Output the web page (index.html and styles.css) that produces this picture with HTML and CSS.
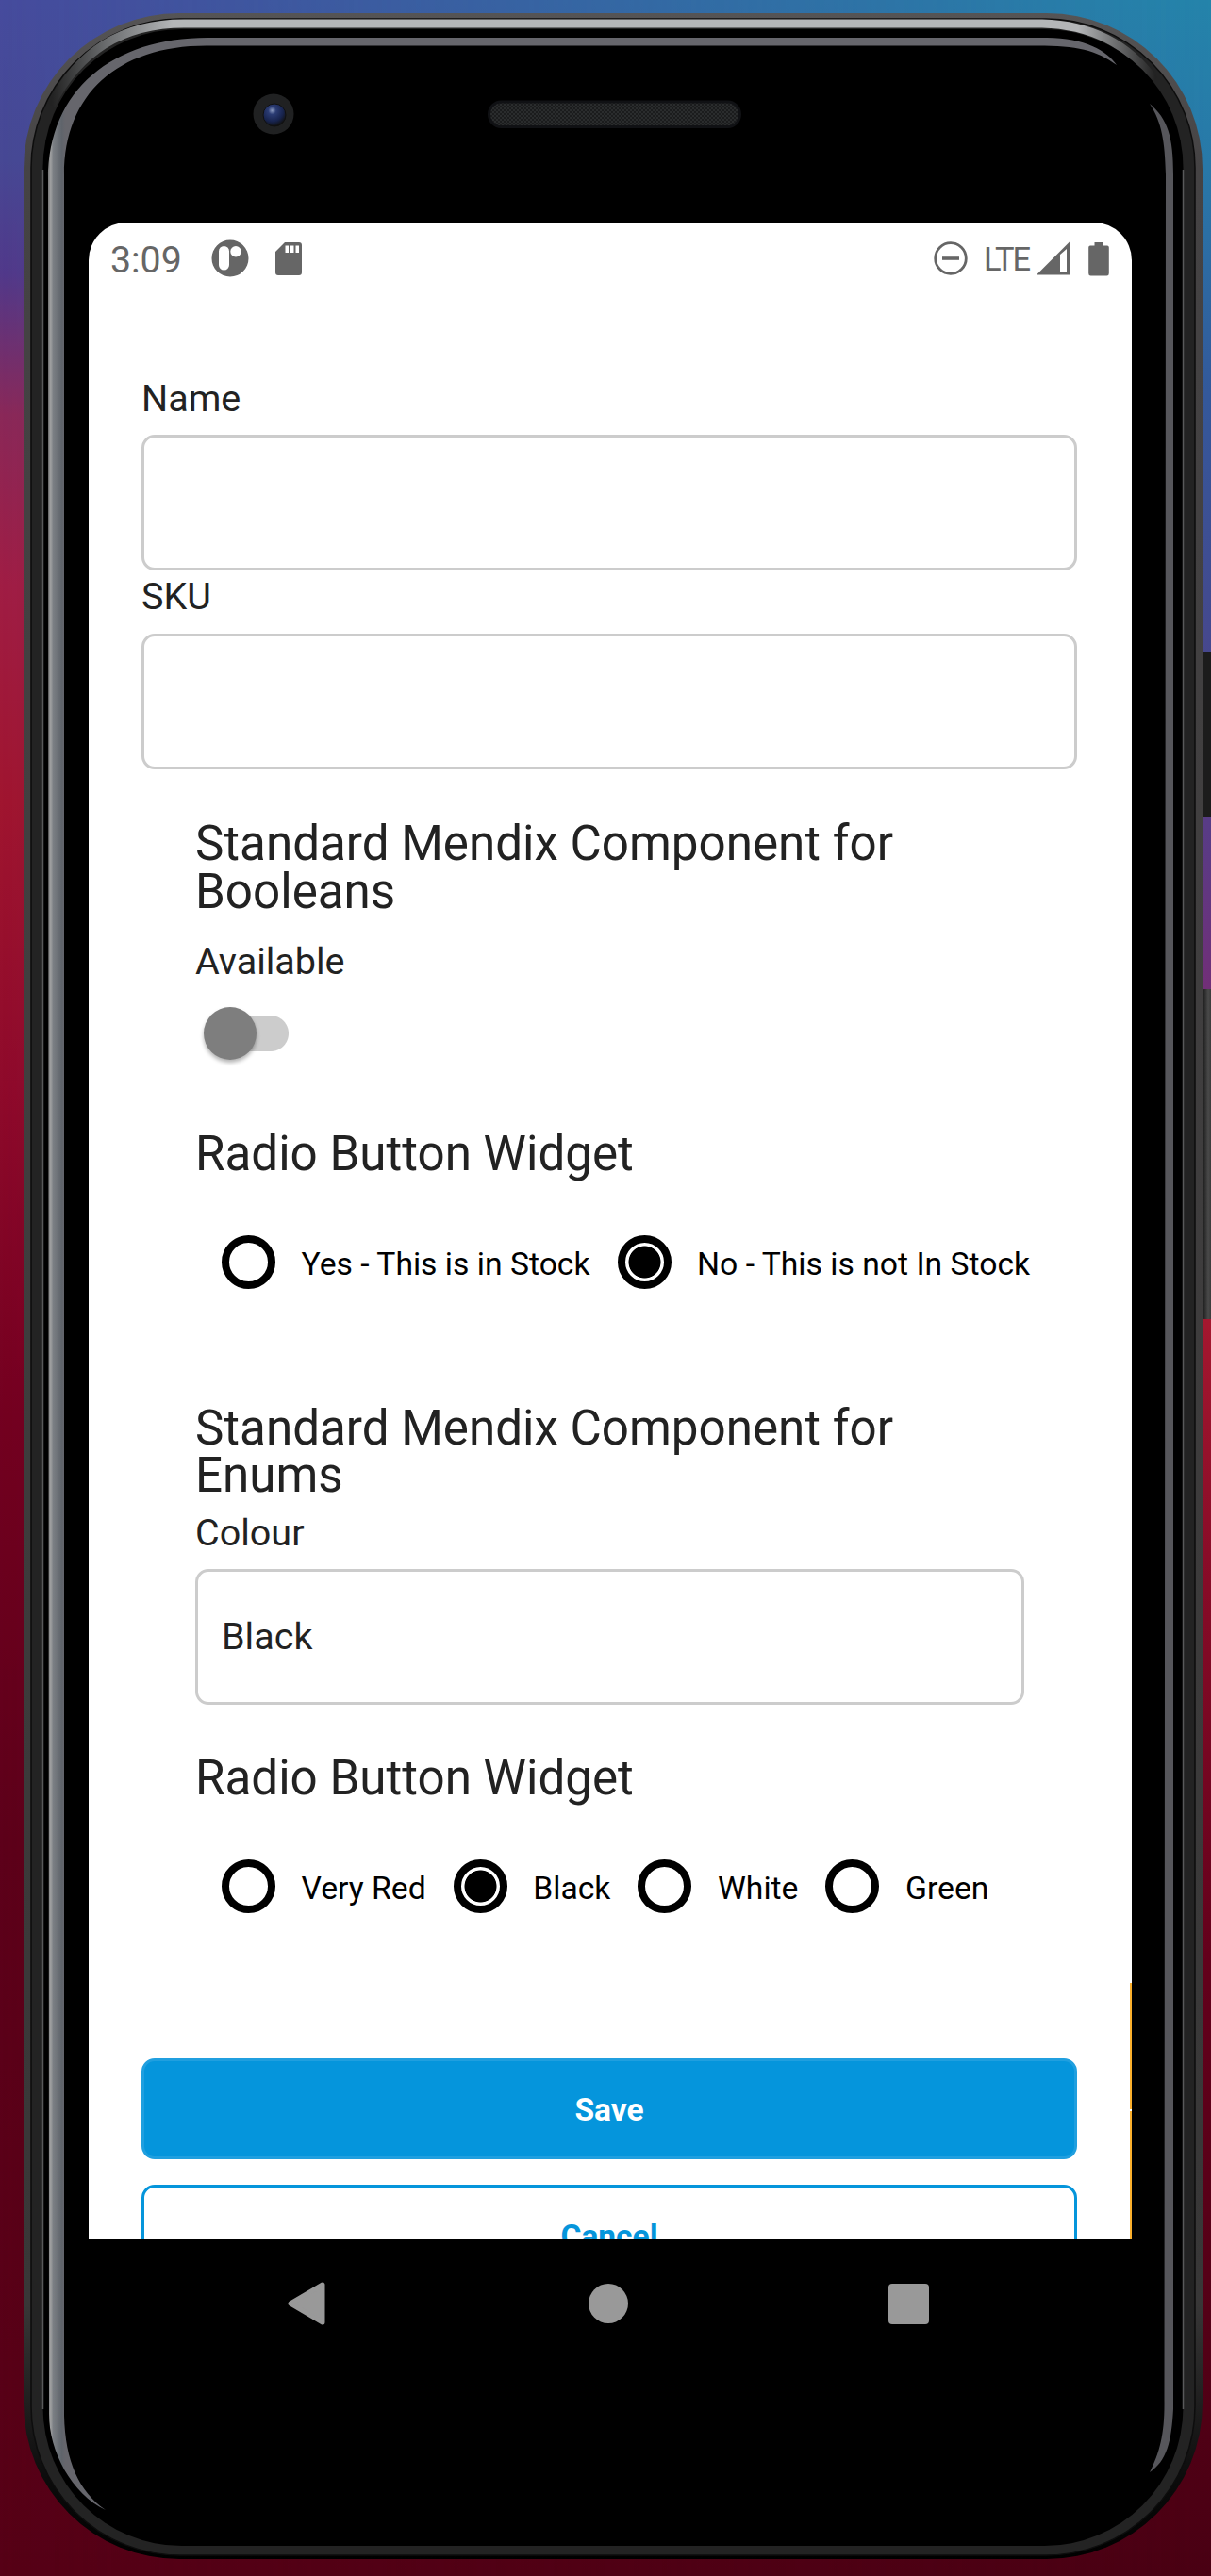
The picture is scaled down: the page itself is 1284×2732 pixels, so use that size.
FILE: index.html
```html
<!DOCTYPE html>
<html lang="en">
<head>
<meta charset="utf-8">
<title>Product form</title>
<link rel="stylesheet" href="styles.css">
</head>
<body>
<div class="stage">
  <div class="wallpaper"></div>
  <svg class="frame" viewBox="0 0 1284 2732" aria-hidden="true">
    <defs>
      <linearGradient id="shell" x1="0" y1="0" x2="0" y2="1">
        <stop offset="0" stop-color="#555455"/><stop offset=".06" stop-color="#454344"/><stop offset=".9" stop-color="#383737"/><stop offset=".97" stop-color="#0b0b0b"/><stop offset="1" stop-color="#000"/>
      </linearGradient>
      <linearGradient id="silver" gradientUnits="userSpaceOnUse" x1="55" y1="0" x2="1225" y2="0">
        <stop offset="0" stop-color="#222"/><stop offset=".05" stop-color="#6c6e70"/><stop offset=".11" stop-color="#b4b6b8"/><stop offset=".93" stop-color="#b4b6b8"/><stop offset="1" stop-color="#222"/>
      </linearGradient>
      <linearGradient id="rim" gradientUnits="userSpaceOnUse" x1="51" y1="0" x2="69" y2="0">
        <stop offset="0" stop-color="#777"/><stop offset=".15" stop-color="#a0a1a2"/><stop offset=".3" stop-color="#7b7f84"/><stop offset=".8" stop-color="#5f646b"/><stop offset="1" stop-color="#66666c"/>
      </linearGradient>
      <linearGradient id="key" x1="0" y1="0" x2="1" y2="0">
        <stop offset="0" stop-color="#080808"/><stop offset=".5" stop-color="#4a4a4a"/><stop offset="1" stop-color="#222"/>
      </linearGradient>
      <radialGradient id="lens" cx=".4" cy=".3" r=".7">
        <stop offset="0" stop-color="#8b9ac0"/><stop offset=".25" stop-color="#2b3c74"/><stop offset=".7" stop-color="#17234d"/><stop offset="1" stop-color="#111"/>
      </radialGradient>
      <pattern id="mesh" width="4" height="4" patternUnits="userSpaceOnUse">
        <rect width="4" height="4" fill="#1b1c1d"/><path d="M0 1h2M2 3h2" stroke="#393b3c"/>
      </pattern>
    </defs>
    <rect x="1273" y="691" width="16" height="176" rx="4" fill="#1c1c1c"/>
    <rect x="1273" y="1049" width="16" height="350" rx="4" fill="url(#key)"/>
    <rect x="25" y="14" width="1250" height="2700" rx="165" fill="url(#shell)"/>
    <rect x="33" y="20" width="1234" height="2690" rx="158" fill="#232323" stroke="#0d0d0d" stroke-width="1.5"/>
    <path d="M54 112Q98 25 195 25H1105Q1182 27 1224 85" fill="none" stroke="url(#silver)" stroke-width="9"/>
    <rect x="45.500" y="31" width="1209" height="2669" rx="147" fill="#000"/>
    <path d="M45.500 180V2555M1254.500 180V2555" stroke="#58595a" stroke-width="1.500"/>
    <path d="M51 190C51 95 120 40 220 40H1110C1150 40 1174 54 1184 69C1162 53 1142 48.500 1100 48.500H220C125 48 68 100 68 185V2562C69 2610 84 2643 112 2662C76 2645 52 2600 52 2560Z" fill="url(#rim)"/>
    <path d="M1219 110C1238 126 1244 145 1244 185V2555C1242 2590 1237 2610 1219 2622C1230 2600 1235 2580 1234.500 2545L1236 185C1235 150 1232 130 1219 110Z" fill="#56565b"/>
    <circle cx="290" cy="121" r="21.500" fill="#202122"/>
    <circle cx="291" cy="122" r="12" fill="url(#lens)" stroke="#111"/>
    <rect x="518.500" y="108" width="266" height="26.500" rx="13" fill="url(#mesh)" stroke="#101114" stroke-width="3"/>
  </svg>

  <div class="phone">
    <main class="screen">
      <header class="statusbar">
        <span class="clock">3:09</span>
        <svg class="ic-app" viewBox="0 0 40 40"><path fill="#666" fill-rule="evenodd" d="M20 .5a19.500 19.500 0 1 0 0 39a19.500 19.500 0 1 0 0-39ZM13.500 7a5.500 5.500 0 0 1 5.500 5.500V27a5.500 5.500 0 0 1-11 0V12.500A5.500 5.500 0 0 1 13.500 7ZM26 7a5.700 5.700 0 1 1 0 11.400A5.700 5.700 0 1 1 26 7Z"/></svg>
        <svg class="ic-sd" viewBox="0 0 30 37"><path fill="#666" fill-rule="evenodd" d="M11 1H26Q29 1 29 4V33Q29 36 26 36H4Q1 36 1 33V11ZM11.500 4.500V12H15V4.500ZM17 4.500V12H20.500V4.500ZM22.500 4.500V12H26V4.500Z"/></svg>
        <svg class="ic-dnd" viewBox="0 0 36 36"><circle cx="18" cy="18" r="16.300" fill="none" stroke="#666" stroke-width="2.800"/><path d="M9 18H27" stroke="#666" stroke-width="3.600"/></svg>
        <span class="net">LTE</span>
        <svg class="ic-signal" viewBox="0 0 36 36"><path fill="#666" fill-rule="evenodd" d="M0 35.500 35 .5V35.500ZM25 14V32.500H32V8Z"/></svg>
        <svg class="ic-batt" viewBox="0 0 22 37"><path fill="#666" d="M6.500 1h9v3.500H20Q21.800 4.500 21.800 6.500V34Q21.800 36.500 19.500 36.500H2.500Q.2 36.500 .2 34V6.500Q.2 4.500 2 4.500H6.500Z"/></svg>
      </header>

      <form class="form">
        <div class="field">
          <label class="label" for="name">Name</label>
          <input class="control" id="name" type="text">
        </div>
        <div class="field">
          <label class="label" for="sku">SKU</label>
          <input class="control" id="sku" type="text">
        </div>

        <section class="group">
          <h2 class="title">Standard Mendix Component for Booleans</h2>
          <p class="label available">Available</p>
          <div class="switch"><span class="thumb"></span></div>
          <h2 class="title after-switch">Radio Button Widget</h2>
          <div class="radios">
            <span class="radio"><i class="dot"></i><span class="opt">Yes - This is in Stock</span></span>
            <span class="radio"><i class="dot on"></i><span class="opt">No - This is not In Stock</span></span>
          </div>
          <h2 class="title enums">Standard Mendix Component for Enums</h2>
          <p class="label colour">Colour</p>
          <div class="control select">Black</div>
          <h2 class="title after-select">Radio Button Widget</h2>
          <div class="radios">
            <span class="radio"><i class="dot"></i><span class="opt">Very Red</span></span>
            <span class="radio"><i class="dot on"></i><span class="opt">Black</span></span>
            <span class="radio"><i class="dot"></i><span class="opt">White</span></span>
            <span class="radio"><i class="dot"></i><span class="opt">Green</span></span>
          </div>
        </section>

        <button class="btn primary" type="button">Save</button>
        <button class="btn" type="button">Cancel</button>
      </form>
      <span class="edge"></span>
    </main>

    <nav class="navbar">
      <svg viewBox="0 0 40 46" width="40" height="46"><path d="M3 23 37 3V43Z" fill="#999" stroke="#999" stroke-width="5" stroke-linejoin="round"/></svg>
      <span class="home"></span>
      <span class="recent"></span>
    </nav>
  </div>
</div>
</body>
</html>
```
FILE: styles.css
```css
* { box-sizing: border-box; }

body {
  margin: 0;
  font-family: Roboto, "Liberation Sans", sans-serif;
  color: #222;
}

.stage {
  display: grid;
  width: 1284px;
  height: 2732px;
  overflow: hidden;
}
.stage > * { grid-area: 1 / 1; z-index: 1; }

/* Left-hand colours below, right-hand colours faded in across the width */
.stage > .wallpaper {
  z-index: 0;
  display: grid;
  background: linear-gradient(#464b9d 0, #474894 170px, #51398a 290px, #8a2858 440px, #a01d44 620px, #a0152f 850px, #8f0a2b 1150px, #730020 1500px, #5d001a 1950px, #560016 2732px);
}
.wallpaper::before {
  content: "";
  background: linear-gradient(#2484aa 0, #2878a8 180px, #33589b 420px, #424a90 650px, #5a3a85 900px, #702f78 1045px, #a5172f 1400px, #8a0c28 1650px, #63001b 2080px, #490013 2732px);
  -webkit-mask-image: linear-gradient(90deg, transparent, #000);
  mask-image: linear-gradient(90deg, transparent, #000);
}

.frame { width: 1284px; height: 2732px; display: block; }

.phone {
  width: 1106px;
  margin-left: 94px;
  padding-top: 236px;
}

.screen {
  position: relative;
  height: 2138.5px;
  overflow: hidden;
  background: #fff;
  border-radius: 40px 40px 0 0;
}

.statusbar {
  display: flex;
  align-items: center;
  height: 76px;
  padding: 0 24px 0 23px;
  color: #666;
}
.clock { font-size: 39.3px; line-height: 48px; padding-top: 3px; width: 107px; }
.ic-app { width: 40px; height: 40px; margin-right: 27px; }
.ic-sd { width: 30px; height: 37px; }
.ic-dnd { width: 36px; height: 36px; margin-left: auto; }
.net { font-size: 34.5px; line-height: 40px; width: 56px; margin-left: 17px; letter-spacing: -2px; padding-top: 1px; }
.ic-signal { width: 36px; height: 36px; }
.ic-batt { width: 22px; height: 37px; margin-left: 19px; }

.form {
  display: flex;
  flex-direction: column;
  padding: 87px 58px 0 56px;
}
.field { display: flex; flex-direction: column; margin-bottom: 4px; }
.field + .field { margin-bottom: 0; }
.label { margin: 0 0 14px; font-size: 39.5px; line-height: 48px; }
.control {
  width: 100%;
  height: 144px;
  border: 3px solid #ccc;
  border-radius: 14px;
  background: #fff;
}
.field + .field .label { margin-bottom: 15px; }

.group { padding: 54px 56px 0 57px; }
.title {
  margin: 0;
  font-size: 51.15px;
  line-height: 50.6px;
  font-weight: 400;
}
.available { margin: 25px 0 24px; }
.after-switch { margin-top: 75px; }
.enums { margin-top: 123px; }
.colour { margin-top: 11px; margin-bottom: 14px; }
.select {
  display: flex;
  align-items: center;
  padding: 0 0 0 25px;
  font-size: 39.5px;
}
.after-select { margin-top: 53px; }

.switch {
  width: 90px;
  height: 56px;
  margin-left: 9px;
  background: linear-gradient(#ccc, #ccc) no-repeat 20px 9px / 51px 38px,
    radial-gradient(circle at 71px 28px, #ccc 18.5px, transparent 19.5px);
}
.thumb {
  display: block;
  width: 56px;
  height: 56px;
  border-radius: 50%;
  background: #7e7e7e;
  box-shadow: 0 3px 4px rgba(0, 0, 0, .3);
}

.radios {
  display: flex;
  gap: 29px;
  margin: 60px -50px 0 28px;
  color: #000;
}
.radio { display: flex; gap: 27.5px; align-items: center; height: 57px; white-space: nowrap; }
.opt { font-size: 33.7px; line-height: 40px; padding-top: 5px; }
.dot {
  width: 57px;
  height: 57px;
  flex: none;
  border: 8.5px solid #000;
  border-radius: 50%;
}
.dot.on { background: radial-gradient(circle, #000 16.6px, #fff 17.4px); }

.btn {
  flex: none;
  height: 107px;
  margin-top: 27px;
  padding: 3px 0 0;
  border: 3px solid #0595db;
  border-radius: 14px;
  background: #fff;
  color: #0595db;
  font: 700 33.5px/40px Roboto, "Liberation Sans", sans-serif;
}
.primary {
  margin-top: 154px;
  background: #0595dc;
  border-color: #209fdf;
  color: #fff;
}

.edge {
  position: absolute;
  right: 0;
  bottom: 0;
  width: 2px;
  height: 272px;
  background: linear-gradient(#fbb02d 134px, #fff 134px 136px, #fbb02d 136px);
}

.navbar {
  display: flex;
  justify-content: space-between;
  align-items: center;
  height: 137px;
  padding: 0 215px 0 211px;
}
.home { width: 42px; height: 42px; border-radius: 50%; background: #999; margin-left: 3px; }
.recent { width: 43px; height: 43px; border-radius: 4px; background: #999; }
```
